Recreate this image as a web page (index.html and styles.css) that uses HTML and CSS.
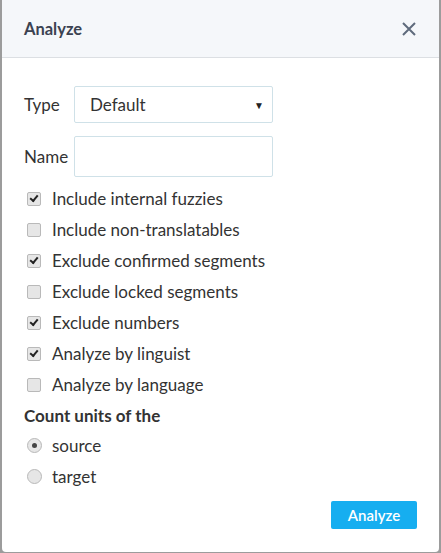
FILE: index.html
```html
<!DOCTYPE html>
<html>
<head>
<meta charset="utf-8">
<link rel="stylesheet" href="styles.css">
</head>
<body>
<div class="modal">
  <div class="header">
    <div class="title">Analyze</div>
    <svg class="close" width="14" height="14" viewBox="0 0 14 14"><path d="M1 1L13 13M13 1L1 13" stroke="#5f6b7c" stroke-width="2" fill="none"/></svg>
  </div>
  <div class="body">
    <div class="field">
      <div class="flabel">Type</div>
      <div class="select"><span>Default</span><span class="arrow">▼</span></div>
    </div>
    <div class="field field-name">
      <div class="flabel">Name</div>
      <div class="input"></div>
    </div>
    <div class="checks">
      <div class="row"><span class="cb on"></span>Include internal fuzzies</div>
      <div class="row"><span class="cb"></span>Include non-translatables</div>
      <div class="row"><span class="cb on"></span>Exclude confirmed segments</div>
      <div class="row"><span class="cb"></span>Exclude locked segments</div>
      <div class="row"><span class="cb on"></span>Exclude numbers</div>
      <div class="row"><span class="cb on"></span>Analyze by linguist</div>
      <div class="row"><span class="cb"></span>Analyze by language</div>
      <div class="row heading">Count units of the</div>
      <div class="row"><span class="rb on"></span>source</div>
      <div class="row"><span class="rb"></span>target</div>
    </div>
    <div class="footer"><button class="btn">Analyze</button></div>
  </div>
</div>
</body>
</html>
```
FILE: styles.css
```css
html, body { margin: 0; padding: 0; }
body {
  background: #9c9c9c;
  width: 441px;
  height: 553px;
  overflow: hidden;
  font-family: Lato, "Open Sans", sans-serif;
  color: #333;
}
.modal {
  width: 437px;
  height: 552px;
  margin: 0 2px;
  background: #fff;
  border-radius: 0 0 4px 4px;
  display: flex;
  flex-direction: column;
}
.header {
  height: 57px;
  background: #f5f7fa;
  border-bottom: 1px solid #dcdfe3;
  box-sizing: content-box;
  display: flex;
  align-items: center;
  justify-content: space-between;
  padding: 0 23px 0 22px;
}
.title {
  font-size: 16.5px;
  font-weight: 700;
  color: #3b4251;
  margin-top: 1px;
}
.close { display: block; }
.body {
  padding: 28px 22px 0 22px;
  display: flex;
  flex-direction: column;
  flex: 1;
}
.field {
  display: flex;
  align-items: center;
}
.field-name { margin-top: 13px; }
.flabel {
  width: 50px;
  font-size: 17px;
  color: #333;
}
.select {
  width: 199px;
  height: 37px;
  box-sizing: border-box;
  border: 1px solid #cfe1e8;
  border-radius: 2px;
  display: flex;
  align-items: center;
  justify-content: space-between;
  padding: 0 8px 0 15px;
  font-size: 17px;
  color: #333;
}
.arrow { font-size: 10px; color: #222; }
.input {
  width: 199px;
  height: 41px;
  box-sizing: border-box;
  border: 1px solid #cfe1e8;
  border-radius: 2px;
}
.checks { margin-top: 6px; display: flex; flex-direction: column; }
.row {
  height: 31px;
  display: flex;
  align-items: center;
  font-size: 17px;
  color: #333;
}
.row.heading { font-weight: 700; height: 30px; }
.cb, .rb {
  width: 12px;
  height: 12px;
  margin: 0 11px 0 3px;
  background: #e6e6e6;
  border: 1px solid #b9b9b9;
  border-radius: 2px;
  position: relative;
  flex: none;
}
.cb.on::after {
  content: "";
  position: absolute;
  left: 2px;
  top: 2px;
  width: 6px;
  height: 3px;
  border-left: 2px solid #222;
  border-bottom: 2px solid #222;
  transform: rotate(-50deg);
}
.rb {
  width: 13px;
  height: 13px;
  border-radius: 50%;
  margin-right: 10px;
}
.rb.on::after {
  content: "";
  position: absolute;
  left: 4px;
  top: 4px;
  width: 5px;
  height: 5px;
  border-radius: 50%;
  background: #444;
}
.footer {
  display: flex;
  justify-content: flex-end;
  margin-top: 9px;
}
.btn {
  height: 28px;
  width: 86px;
  border: none;
  border-radius: 2px;
  background: #16aef0;
  color: #fff;
  font-family: Lato, "Open Sans", sans-serif;
  font-size: 15px;
  font-weight: 600;
  padding: 0;
}
```
